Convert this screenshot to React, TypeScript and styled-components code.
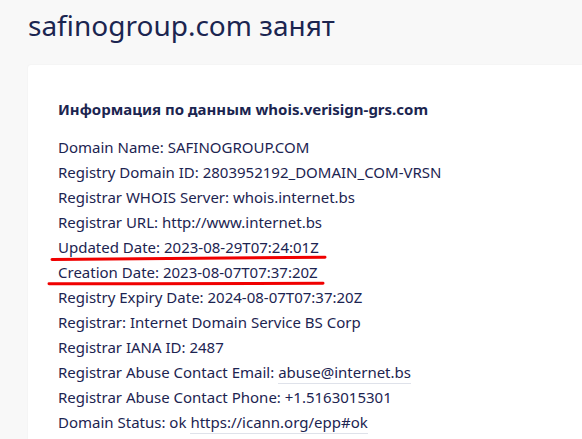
import React from "react";
import styled, { createGlobalStyle } from "styled-components";

const GlobalStyle = createGlobalStyle`
  html, body {
    margin: 0;
    padding: 0;
    background: #f8f8f8;
    font-family: "Noto Sans", "Open Sans", sans-serif;
    color: #1c2451;
    overflow: hidden;
  }
`;

const Page = styled.div`
  padding: 0 0 0 28px;
  min-height: 439px;
  box-sizing: border-box;
`;

const Title = styled.h1`
  margin: 0;
  padding-top: 6px;
  font-size: 28px;
  font-weight: 400;
  line-height: 38px;
  color: #1b2550;
  letter-spacing: 0;
`;

const Card = styled.section`
  margin-top: 21px;
  background: #ffffff;
  border-radius: 3px 0 0 0;
  box-shadow: 0 0 2px rgba(0, 0, 0, 0.06);
  padding: 32px 0 20px 30px;
`;

const Heading = styled.h2`
  margin: 0 0 13px;
  font-size: 15px;
  font-weight: 700;
  line-height: 25px;
  color: #1b2550;
`;

const Row = styled.div`
  position: relative;
  font-size: 15px;
  line-height: 25px;
  white-space: nowrap;
`;

const Link = styled.a`
  color: inherit;
  text-decoration: none;
  border-bottom: 1px solid #dfe2ea;
  padding-bottom: 1px;
`;

const Mark = styled.svg`
  position: absolute;
  left: -12px;
  top: 18px;
  overflow: visible;
  pointer-events: none;
`;

type RowData = { label: string; value: string; link?: string; mark?: [number, number, number, number] };

const rows: RowData[] = [
  { label: "Domain Name:", value: "SAFINOGROUP.COM" },
  { label: "Registry Domain ID:", value: "2803952192_DOMAIN_COM-VRSN" },
  { label: "Registrar WHOIS Server:", value: "whois.internet.bs" },
  { label: "Registrar URL:", value: "http://www.internet.bs" },
  { label: "Updated Date:", value: "2023-08-29T07:24:01Z", mark: [6, 6.5, 279, 4.3] },
  { label: "Creation Date:", value: "2023-08-07T07:37:20Z", mark: [3, 5.7, 277, 5.3] },
  { label: "Registry Expiry Date:", value: "2024-08-07T07:37:20Z" },
  { label: "Registrar:", value: "Internet Domain Service BS Corp" },
  { label: "Registrar IANA ID:", value: "2487" },
  { label: "Registrar Abuse Contact Email:", value: "", link: "abuse@internet.bs" },
  { label: "Registrar Abuse Contact Phone:", value: "+1.5163015301" },
  { label: "Domain Status:", value: "ok", link: "https://icann.org/epp#ok" },
];

export default function App() {
  return (
    <>
      <GlobalStyle />
      <Page>
        <Title>safinogroup.com занят</Title>
        <Card>
          <Heading>Информация по данным whois.verisign-grs.com</Heading>
          {rows.map((r) => (
            <Row key={r.label}>
              {r.label}
              {r.value ? ` ${r.value}` : ""}
              {r.link ? (
                <>
                  {" "}
                  <Link href="#">{r.link}</Link>
                </>
              ) : null}
              {r.mark ? (
                <Mark width="290" height="10" viewBox="0 0 290 10">
                  <path
                    d={`M${r.mark[0]} ${r.mark[1]} Q${(r.mark[0] + r.mark[2]) / 2} ${(r.mark[1] + r.mark[3]) / 2 + 0.6} ${r.mark[2]} ${r.mark[3]}`}
                    stroke="#f00000"
                    strokeWidth="3"
                    strokeLinecap="round"
                    fill="none"
                  />
                </Mark>
              ) : null}
            </Row>
          ))}
        </Card>
      </Page>
    </>
  );
}
